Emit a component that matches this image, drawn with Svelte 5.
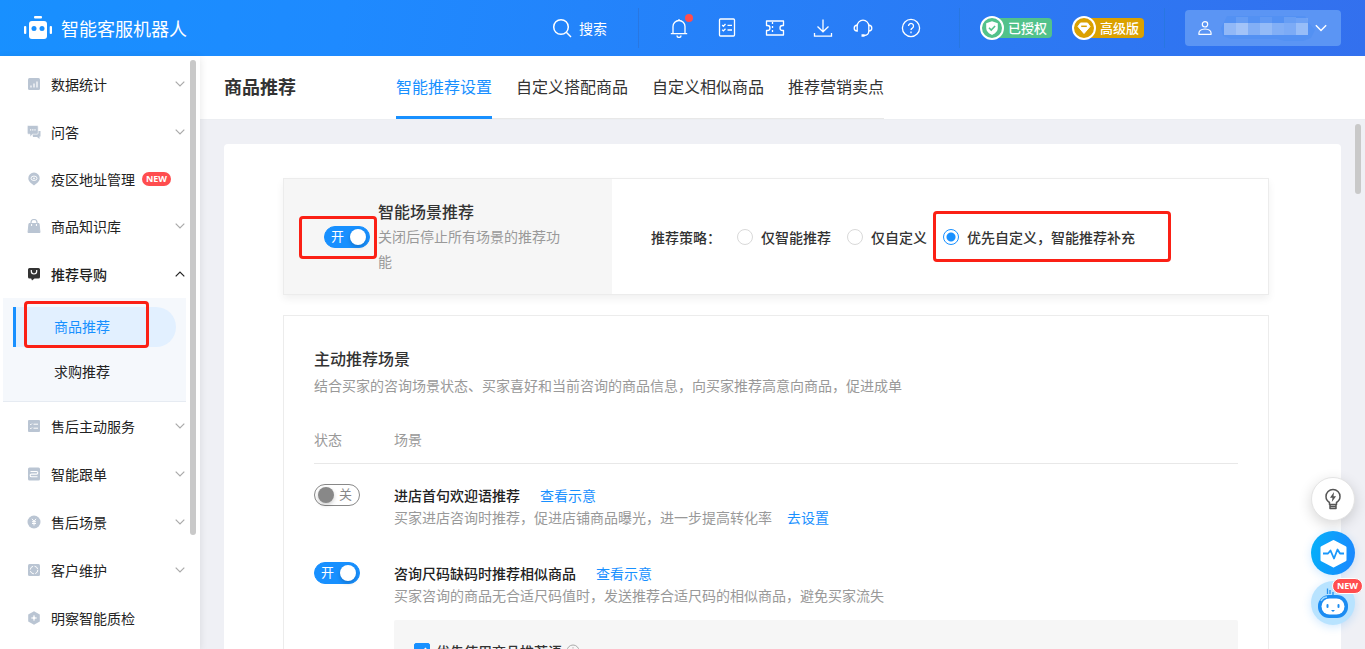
<script>
  let strategy = $state('custom-first');
  let preferPhrase = $state(true);
  let smart = $state(true);

  const menuTop = [
    { name: '数据统计', icon: 'chart', arrow: true },
    { name: '问答', icon: 'chat', arrow: true },
    { name: '疫区地址管理', icon: 'pin', isNew: true },
    { name: '商品知识库', icon: 'bag', arrow: true },
    { name: '推荐导购', icon: 'shop', arrow: true, open: true }
  ];
  const menuBottom = [
    { name: '售后主动服务', icon: 'list', arrow: true },
    { name: '智能跟单', icon: 'track', arrow: true },
    { name: '售后场景', icon: 'yen', arrow: true },
    { name: '客户维护', icon: 'care', arrow: true },
    { name: '明察智能质检', icon: 'hex' }
  ];
  const tabs = ['智能推荐设置', '自定义搭配商品', '自定义相似商品', '推荐营销卖点'];
  const strategies = [
    { id: 'smart', label: '仅智能推荐' },
    { id: 'custom', label: '仅自定义' },
    { id: 'custom-first', label: '优先自定义，智能推荐补充' }
  ];
  let scenes = $state([
    { on: false, title: '进店首句欢迎语推荐', desc: '买家进店咨询时推荐，促进店铺商品曝光，进一步提高转化率', setup: true },
    { on: true, title: '咨询尺码缺码时推荐相似商品', desc: '买家咨询的商品无合适尺码值时，发送推荐合适尺码的相似商品，避免买家流失', box: true }
  ]);
  const mosaic = [
    [0, 8, 12, 12, 0.36], [12, 8, 12, 12, 0.46], [24, 8, 12, 12, 0.28], [36, 8, 12, 12, 0.38], [48, 8, 12, 12, 0.28],
    [60, 8, 12, 12, 0.24], [72, 8, 12, 12, 0.4], [12, 2, 12, 6, 0.1], [36, 2, 12, 6, 0.08], [60, 2, 12, 6, 0.12], [72, 3, 12, 5, 0.16]
  ];
</script>

{#snippet menuIcon(kind)}
  <svg class="mi" viewBox="0 0 14 14" aria-hidden="true">
    {#if kind === 'chart'}
      <rect x="1" y="1" width="12" height="12" rx="1.5" fill="currentColor" />
      <path d="M4 10.500V8.500M7 10.500V6.500M10 10.500V4.500" stroke="#fff" stroke-width="1.200" />
    {:else if kind === 'chat'}
      <path d="M5 6h8.500v5.500h-1V14l-2.500-2H6z" fill="currentColor" />
      <path d="M1.500 .5h8.500a1.200 1.200 0 0 1 1.200 1.200v6.300a1.200 1.200 0 0 1-1.200 1.200H5.500L3 12V9.200H1.500A1.200 1.200 0 0 1 .3 8V1.700A1.200 1.200 0 0 1 1.500.5z" fill="currentColor" stroke="#fff" stroke-width=".6" />
      <path d="M3 4.800h1.200M5.200 4.800h1.200M7.400 4.800h1.200" stroke="#fff" stroke-width="1.200" />
    {:else if kind === 'pin'}
      <path d="M7 .5a5.700 5.700 0 0 1 5.700 5.700c0 3.300-3.400 5.500-5.700 7.300C4.700 11.700 1.300 9.500 1.300 6.200A5.700 5.700 0 0 1 7 .5z" fill="currentColor" />
      <ellipse cx="7" cy="6.300" rx="3" ry="2.200" fill="none" stroke="#fff" stroke-width=".9" />
      <circle cx="7" cy="6.300" r=".9" fill="#fff" />
    {:else if kind === 'bag'}
      <path d="M4 5V3.500a3 3 0 0 1 6 0V5" fill="none" stroke="currentColor" stroke-width="1.200" />
      <path d="M2 4.500h10l1 9H1z" fill="currentColor" stroke="currentColor" stroke-linejoin="round" />
      <path d="M4.600 5v2M9.400 5v2" stroke="#fff" />
    {:else if kind === 'shop'}
      <path d="M2.500 1h9A1.500 1.500 0 0 1 13 2.500v7.500a1.500 1.500 0 0 1-1.500 1.500H7.500L5 13.500 4.200 11.500H2.500A1.500 1.500 0 0 1 1 10V2.500A1.500 1.500 0 0 1 2.500 1z" fill="currentColor" />
      <path d="M4.300 3v1.300a2.700 2.700 0 0 0 5.400 0V3" fill="none" stroke="#fff" stroke-width="1.200" />
    {:else if kind === 'list'}
      <rect x="1" y="1" width="12" height="12" rx="1" fill="currentColor" />
      <path d="M3 5l.8.800L5 4.500M3 9l.8.800L5 8.500M6.500 5.200H11M6.500 9.200H11" fill="none" stroke="#fff" />
    {:else if kind === 'track'}
      <rect x="1" y=".5" width="12" height="13" rx="1.500" fill="currentColor" />
      <path d="M3.500 4.500h6a1.300 1.300 0 0 1 0 2.600h-5a1.300 1.300 0 0 0 0 2.600h6" fill="none" stroke="#fff" stroke-width="1.100" />
    {:else if kind === 'yen'}
      <circle cx="7" cy="7" r="6.500" fill="currentColor" />
      <path d="M5 3.800l2 2.500 2-2.500M7 6.300v4.200M5 6.700h4M5 8.500h4" fill="none" stroke="#fff" />
    {:else if kind === 'care'}
      <rect x="1" y="1" width="12" height="12" rx="1.500" fill="currentColor" />
      <circle cx="7" cy="7" r="3.800" fill="none" stroke="#fff" stroke-dasharray="4.500 1.500" />
    {:else}
      <path d="M7 .3l5.800 3.300v6.800L7 13.700 1.200 10.400V3.600z" fill="currentColor" />
      <path d="M7 4.200v5.600M4.200 7h5.600" stroke="#fff" />
      <circle cx="7" cy="7" r="1.400" fill="#fff" />
    {/if}
  </svg>
{/snippet}

{#snippet menuRow(item)}
  <a class="item" class:open={item.open} class:slim={item.isNew} href="#menu">
    {@render menuIcon(item.icon)}
    <span>{item.name}</span>
    {#if item.isNew}<em class="new">NEW</em>{/if}
    {#if item.arrow}
      <svg class="arrow" viewBox="0 0 10 6" aria-hidden="true"><path d={item.open ? 'M.7 5.300L5 1l4.300 4.300' : 'M.7 .7L5 5l4.300-4.300'} /></svg>
    {/if}
  </a>
{/snippet}

{#snippet toggle(on, label, flip)}
  <button class="switch" class:on role="switch" aria-checked={on} aria-label={label} onclick={flip}>
    <span>{on ? '开' : '关'}</span><i></i>
  </button>
{/snippet}

<div class="app">
  <header class="top">
    <svg class="robot" viewBox="0 0 28 24" aria-hidden="true">
      <g fill="#fff"><rect x="10" y="0" width="8" height="2.500" rx="1" /><rect x="5" y="5" width="18" height="18" rx="3" /><rect x="0" y="10" width="2.300" height="8" rx="1" /><rect x="25.700" y="10" width="2.300" height="8" rx="1" /></g>
      <g fill="#1890ff"><circle cx="10" cy="12.500" r="2.500" /><circle cx="18" cy="12.500" r="2.500" /></g>
    </svg>
    <strong class="brand">智能客服机器人</strong>

    <button class="search">
      <svg viewBox="0 0 20 20" aria-hidden="true"><circle cx="9" cy="9" r="7.300" /><path d="M14.300 14.300L19 19" /></svg>
      搜索
    </button>
    <hr />
    <div class="tools">
      <button aria-label="消息">
        <svg viewBox="0 0 20 20"><path d="M4 15.500V8.500a6 6 0 0 1 12 0v7M1.800 15.700h16.400M10 2.500V1M8 17.500a2 2 0 0 0 4 0" /></svg>
        <i class="dot"></i>
      </button>
      <button aria-label="任务"><svg viewBox="0 0 20 20"><rect x="2.500" y="1" width="15" height="17" rx="1" /><path d="M5.200 7l1.200 1.200L8.500 6M5.200 11.700l1.200 1.200 2.100-2.200M10.500 7.300H15M10.500 12H15" /></svg></button>
      <button aria-label="卡券"><svg viewBox="0 0 20 20"><path d="M2 3h16.500v4.500h-1a2.500 2.500 0 0 0 0 5h1V17H1.500v-4.500h1a2.500 2.500 0 0 0 0-5h-1V3z" stroke-linejoin="round" /><path d="M7.500 4v12" stroke-dasharray="2 2" /></svg></button>
      <div class="pair">
        <button aria-label="下载"><svg viewBox="0 0 20 20"><path d="M10 1.500v12.300M4.500 8.500l5.500 5.300 5.500-5.300M1.500 15v3.200h17V15" /></svg></button>
        <button aria-label="客服"><svg viewBox="0 0 20 20"><path d="M4.200 13V8a5.800 5.800 0 0 1 11.600 0v5c0 3-2 4.500-5 4.500M4.200 7c-4 .5-4 6 0 6zM15.800 7c4 .5 4 6 0 6z" /><path d="M8.500 17.500h3" stroke-width="2.500" /></svg></button>
      </div>
      <button aria-label="帮助"><svg viewBox="0 0 20 20"><circle cx="10" cy="10" r="8.600" /><path d="M7.500 8a2.500 2.500 0 1 1 3.800 2.100c-.9.500-1.300.9-1.300 2M10 13.500v1.700" /></svg></button>
    </div>
    <hr />
    <div class="tags">
      <span class="tag green">
        <svg viewBox="0 0 24 24" aria-hidden="true"><circle cx="12" cy="12" r="11" /><path d="M12 5.300l5.800 2v4.500c0 3.500-2.500 5.700-5.800 7.200-3.300-1.500-5.800-3.700-5.800-7.200V7.300z" fill="#fff" stroke="none" /><path d="M9 11.800l2.200 2.200 3.900-4" fill="none" stroke="#52c28b" stroke-width="1.600" /></svg>
        已授权
      </span>
      <span class="tag gold">
        <svg viewBox="0 0 24 24" aria-hidden="true"><circle cx="12" cy="12" r="11" /><path d="M8.500 7h7l2.500 3.500L12 17.500l-6-7z" fill="#fff" stroke="#fff" stroke-linejoin="round" /><path d="M9.200 10.300h5.600" stroke="#dba100" stroke-width="1.500" /></svg>
        高级版
      </span>
    </div>
    <hr />
    <button class="user" aria-label="账号">
      <svg class="person" viewBox="0 0 14 14" aria-hidden="true"><circle cx="7" cy="3.300" r="2.700" /><path d="M1 13.300c-.6-3.300 2-5.300 6-5.300s6.600 2 6 5.300z" /></svg>
      <svg class="mosaic" viewBox="0 0 94 26" aria-hidden="true">
        <path d="M6 1h78l4 7 6 7-4 8-8 3H64l-8-2H10l-8-3-2-8z" fill="#5391f3" />
        <g transform="translate(3 0)">{#each mosaic as [x, y, w, h, o]}<rect {x} {y} width={w} height={h} fill="#fff" opacity={o} />{/each}</g>
      </svg>
      <svg class="down" viewBox="0 0 10 6" aria-hidden="true"><path d="M.7 .7L5 5l4.300-4.300" /></svg>
    </button>
  </header>

  <aside>
    <nav class="menu">
      {#each menuTop as item}{@render menuRow(item)}{/each}
      <div class="sub">
        <a class="active" href="#goods">商品推荐<i class="mark"></i></a>
        <a href="#wanted">求购推荐</a>
      </div>
      {#each menuBottom as item}{@render menuRow(item)}{/each}
    </nav>
    <i class="thumb"></i>
  </aside>

  <main>
    <div class="pagehead">
      <h1>商品推荐</h1>
      <nav class="tabs">
        {#each tabs as tab, i}<a class:current={i === 0} href="#tab">{tab}</a>{/each}
      </nav>
    </div>

    <div class="body">
      <i class="thumb"></i>
      <div class="sheet">
        <section class="panel strategy">
          <div class="intro">
            <div class="holder">
              {@render toggle(smart, '智能场景推荐', () => (smart = !smart))}
              <i class="mark"></i>
            </div>
            <div>
              <h2>智能场景推荐</h2>
              <p>关闭后停止所有场景的推荐功能</p>
            </div>
          </div>
          <div class="choices" role="radiogroup" aria-label="推荐策略">
            <span>推荐策略：</span>
            {#each strategies as s}
              <label>
                <input type="radio" name="strategy" value={s.id} bind:group={strategy} />
                {s.label}
                {#if s.id === 'custom-first'}<i class="mark"></i>{/if}
              </label>
            {/each}
          </div>
        </section>

        <section class="panel scenes">
          <h2>主动推荐场景</h2>
          <p>结合买家的咨询场景状态、买家喜好和当前咨询的商品信息，向买家推荐高意向商品，促进成单</p>
          <table>
            <thead><tr><th class="state">状态</th><th>场景</th></tr></thead>
            <tbody>
              {#each scenes as scene}
                <tr>
                  <td>{@render toggle(scene.on, scene.title, () => (scene.on = !scene.on))}</td>
                  <td>
                    <div class="line"><b>{scene.title}</b><a href="#demo">查看示意</a></div>
                    <div class="line note">{scene.desc}{#if scene.setup}<a href="#setup">去设置</a>{/if}</div>
                    {#if scene.box}
                      <div class="box">
                        <label>
                          <input type="checkbox" bind:checked={preferPhrase} />
                          优先使用商品推荐语
                        </label>
                        <svg viewBox="0 0 14 14" aria-hidden="true"><circle cx="7" cy="7" r="6" /><path d="M7 3.200v1.300M7 6v5" /></svg>
                      </div>
                    {/if}
                  </td>
                </tr>
              {/each}
            </tbody>
          </table>
        </section>
      </div>
    </div>
  </main>

  <div class="floats">
    <button class="tip" aria-label="建议">
      <svg viewBox="0 0 24 24"><path d="M8.500 17.500v-2C6 14 5 12 5 9.500a7 7 0 0 1 14 0c0 2.500-1 4.500-3.500 6v2zM9 17.500v4h6v-4M9 19.500h6" fill="none" stroke="#555" stroke-width="1.500" stroke-linejoin="round" /><path d="M13 5l-4 5.800h2.500L10.800 15l4.300-5.800h-2.600z" fill="#555" /></svg>
    </button>
    <button class="pulse" aria-label="监控">
      <svg viewBox="0 0 44 44"><path d="M22.500 10.500l11.500 6v12.500l-11.500 6-11.500-6V16.500z" fill="#fff" stroke="#fff" stroke-width="3" stroke-linejoin="round" /><path d="M12 22.500h5l2.500-3 3.500 8 3.500-9 2.500 4h4" fill="none" stroke="#1a98fb" stroke-width="1.800" stroke-linejoin="round" /></svg>
    </button>
    <button class="bot" aria-label="机器人助手">
      <svg viewBox="0 0 44 44"><path d="M22 15v-4M19 13V9M16.500 13V7.500" stroke="#2491ee" stroke-width="1.300" /><rect x="7" y="14" width="30" height="23" rx="11" fill="#1b8cf2" /><path d="M10 20q2-4 6-4" fill="none" stroke="#9ad8ff" stroke-width="1.500" /><rect x="10.500" y="17.500" width="23" height="16" rx="8" fill="#fff" /><g fill="#1b8cf2"><rect x="15.500" y="23" width="2" height="4" rx="1" /><rect x="26.500" y="23" width="2" height="4" rx="1" /><path d="M20 29h4l-2 2z" /></g></svg>
      <em class="new">NEW</em>
    </button>
  </div>
</div>

<style>
  :global(body) { margin: 0; }
  .app, .app * { box-sizing: border-box; }
  .app {
    display: grid;
    grid-template: 56px minmax(0, 1fr) / 200px minmax(0, 1fr);
    height: 100vh;
    overflow: hidden;
    position: relative;
    background: #eff0f5;
    color: #333;
    font: 14px/22px "Noto Sans CJK SC", sans-serif;
  }
  button { font: inherit; color: inherit; border: 0; padding: 0; background: none; cursor: pointer; }
  a { color: inherit; text-decoration: none; }
  h1, h2, p { margin: 0; }
  svg { display: block; flex: none; }

  .top {
    grid-column: 1 / -1;
    display: flex;
    align-items: center;
    padding: 0 24px;
    color: #fff;
    background: linear-gradient(100deg, #1890ff, #1e8aff 25%, #3370ee);
  }
  .robot { width: 28px; height: 24px; }
  .brand { margin-left: 9px; font-size: 18px; line-height: 24px; font-weight: 400; }
  .search { display: flex; align-items: center; gap: 7px; margin-left: auto; }
  .search svg { width: 20px; height: 20px; }
  .search svg, .tools svg, .person, .down { fill: none; stroke: #fff; stroke-width: 1.5; }
  .top hr { width: 1px; height: 40px; margin: 0 20px 0 31px; border: 0; background: #2877e2; }
  .tools { display: flex; gap: 28px; margin-left: 10px; }
  .tools button { position: relative; }
  .tools svg { width: 20px; height: 20px; stroke-width: 1.3; }
  .pair { display: flex; gap: 20px; }
  .dot { position: absolute; top: -4px; right: -4px; width: 8px; height: 8px; border-radius: 50%; background: #ff4d4f; }
  .tools + hr { margin-left: 38px; }
  .tags + hr { margin-left: 20px; }
  .tags { display: flex; gap: 30px; padding-left: 10px; }
  .tags { gap: 30px; }
  .tag { display: flex; align-items: center; gap: 4px; width: 62px; height: 20px; border-radius: 4px; background: var(--c); font-size: 13px; font-weight: 500; white-space: nowrap; }
  .tag svg { width: 24px; height: 24px; margin-left: -10px; fill: var(--c); }
  .tag circle { stroke: #fff; stroke-width: 2; }
  .green { --c: #52c28b; }
  .gold { --c: #dba100; }
  .user { display: flex; align-items: center; width: 156px; height: 36px; padding: 0 14px 0 13px; border-radius: 4px; background: #5b95f4; }
  .person { width: 14px; height: 14px; stroke-width: 1.2; }
  .mosaic { width: 94px; height: 26px; margin-left: 9px; }
  .down { width: 12px; height: 8px; margin-left: auto; stroke-width: 1.2; }

  aside { position: relative; z-index: 1; overflow: hidden; background: #fff; box-shadow: 0 2px 8px rgba(0, 0, 0, 0.1); }
  .menu { padding: 4px 14px 0 3px; }
  .item { display: flex; align-items: center; height: 48px; padding: 0 1px 0 24px; color: #222; }
  .slim { height: 46px; }
  .mi { width: 14px; height: 14px; margin-right: 10px; color: #bac5d3; }
  .open .mi { color: #333; }
  .open { font-weight: 500; }
  .arrow { width: 10px; height: 6px; margin-left: auto; fill: none; stroke: #aaa; stroke-width: 1.2; }
  .open .arrow { stroke: #222; }
  .new { display: inline-block; height: 14px; padding: 0 4px; border-radius: 7px; background: #ff4d4f; color: #fff; font: 700 9px/14px "Open Sans", sans-serif; }
  .item .new { margin-left: 7px; }
  .sub { display: grid; gap: 5px; padding: 9px 10px; border-bottom: 1px solid #e6ebf2; background: #f5f8fc; }
  .sub a { position: relative; height: 40px; padding-left: 41px; line-height: 38px; color: #222; }
  .sub .active { padding-left: 38px; border-left: 3px solid #1890ff; border-radius: 0 20px 20px 0; background: #e2f0ff; color: #1890ff; }

  .mark { position: absolute; border: 3px solid #fb2015; border-radius: 4px; pointer-events: none; }
  .sub .mark { inset: -6px 27px -1px 8px; }
  .holder .mark { inset: -10px -7px -11px -25px; }
  .choices .mark { inset: -15px -36px -14px -10px; }

  .thumb { position: absolute; width: 6px; border-radius: 3px; background: #c9c9c9; }
  aside .thumb { top: 4px; right: 4px; height: 475px; }
  .body .thumb { top: 4px; right: 4px; height: 70px; }

  main { display: flex; flex-direction: column; min-width: 0; }
  .pagehead { display: flex; height: 64px; flex: none; padding-left: 24px; background: #fff; border-bottom: 1px solid #eceef2; }
  h1 { width: 172px; font-size: 18px; line-height: 60px; font-weight: 700; }
  .tabs { display: flex; gap: 24px; font-size: 16px; line-height: 60px; border-bottom: 1px solid #e8e8e8; white-space: nowrap; }
  .tabs a { height: 63px; }
  .tabs .current { color: #1890ff; border-bottom: 3px solid #1890ff; }
  .body { position: relative; flex: 1; min-height: 0; padding: 24px 24px 0; overflow: hidden; }
  .sheet { padding: 34px 72px 40px 59px; border-radius: 4px; background: #fff; }
  .panel { border: 1px solid #ececec; }
  .panel h2 { font-size: 16px; line-height: 25px; font-weight: 500; }
  .panel p { color: #999; }
  .strategy { display: grid; grid-template-columns: 1fr 2fr; margin-bottom: 20px; box-shadow: 0 4px 8px rgba(0, 0, 0, 0.06); }
  .intro { display: flex; align-items: center; gap: 8px; padding: 20px 40px; background: #f6f6f6; }
  .intro p { line-height: 25px; }
  .holder { position: relative; flex: none; }
  .choices { display: flex; align-items: center; padding-left: 39px; font-weight: 500; white-space: nowrap; }
  .choices label { position: relative; display: flex; align-items: center; gap: 8px; margin-left: 16px; }
  input { appearance: none; flex: none; width: 16px; height: 16px; margin: 0; border: 1px solid #d9d9d9; background: #fff; }
  input[type='radio'] { border-radius: 50%; }
  input[type='radio']:checked { border-color: #1890ff; background: radial-gradient(circle, #1890ff 4px, #fff 5px); }
  input[type='checkbox'] { border-radius: 2px; }
  input[type='checkbox']:checked {
    border-color: #1890ff;
    background: #1890ff url("data:image/svg+xml,%3Csvg xmlns='http://www.w3.org/2000/svg' viewBox='0 0 14 14'%3E%3Cpath d='M3 7l3 3 5-6' fill='none' stroke='white' stroke-width='1.800'/%3E%3C/svg%3E");
  }

  .switch { display: flex; align-items: center; justify-content: space-between; flex-direction: row-reverse; width: 46px; height: 22px; padding: 0 7px 0 3px; border: 1px solid #888; border-radius: 11px; background: #fff; color: #888; font-size: 13px; line-height: 18px; }
  .switch span { padding-bottom: 2px; }
  .switch i { width: 16px; height: 16px; border-radius: 50%; background: #888; box-shadow: 0 2px 4px rgba(0, 0, 0, 0.2); }
  .switch.on { flex-direction: row; padding: 0 3px 0 6px; border-color: #1890ff; background: #1890ff; color: #fff; }
  .switch.on i { background: #fff; }

  .scenes { padding: 30px; }
  .scenes > p { line-height: 28px; }
  table { width: 100%; margin-top: 16px; border-collapse: collapse; table-layout: fixed; }
  th { height: 48px; padding: 0; border-bottom: 1px solid #e8e8e8; color: #999; font-weight: 400; text-align: left; }
  .state { width: 80px; }
  td { padding: 20px 0 14px; vertical-align: top; }
  .line { white-space: nowrap; }
  .line b { color: #222; font-weight: 500; }
  .line a { color: #1890ff; margin-left: 20px; }
  .note { color: #999; }
  .note a { margin-left: 15px; }
  .box { display: flex; align-items: flex-start; gap: 4px; height: 100px; margin-top: 14px; padding: 20px; border-radius: 2px; background: #f6f6f6; font-weight: 500; }
  .box label { display: flex; align-items: center; gap: 6px; }
  .box svg { width: 14px; height: 22px; fill: none; stroke: #aaa; }

  .floats { position: absolute; right: 10px; bottom: 24px; z-index: 2; display: grid; gap: 6px; }
  .floats button { position: relative; width: 44px; height: 44px; border-radius: 50%; }
  .floats .tip { display: grid; place-items: center; margin-bottom: 4px; border: 1px solid #e4e4e4; background: #fff; box-shadow: 0 4px 14px rgba(0, 0, 0, 0.16); }
  .tip svg { width: 24px; height: 24px; }
  .floats .pulse { background: linear-gradient(100deg, #04b1f9, #1c86ff); box-shadow: 0 2px 10px rgba(24, 144, 255, 0.2); }
  .floats .bot { background: #b8e3ff; box-shadow: 0 2px 10px rgba(24, 144, 255, 0.2); }
  .floats .new { position: absolute; top: -3px; right: -8px; height: 16px; border: 1px solid #fff; border-radius: 8px; }
</style>
